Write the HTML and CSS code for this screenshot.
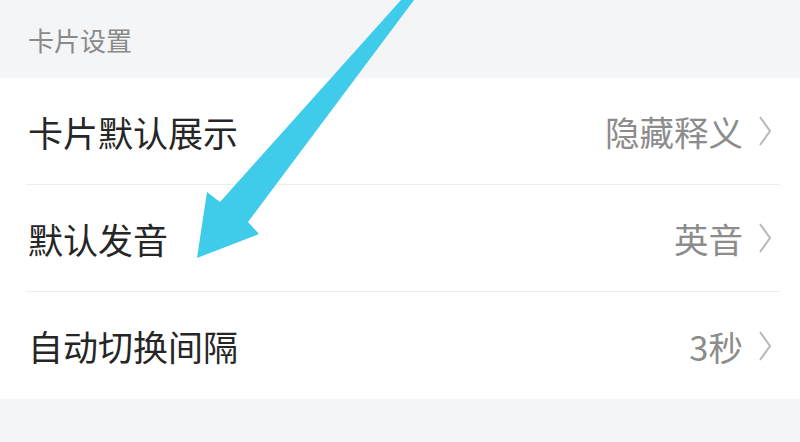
FILE: index.html
```html
<!DOCTYPE html>
<html lang="zh-CN">
<head>
    <meta charset="UTF-8">
    <meta name="viewport" content="width=device-width, initial-scale=1.0">
    <title>卡片设置</title>
    <link rel="stylesheet" href="styles.css">
</head>
<body>
    <div class="page">
        <div class="section-title">卡片设置</div>

        <div class="card">
            <div class="row">
                <span class="label">卡片默认展示</span>
                <span class="value">隐藏释义
                    <svg class="chevron" viewBox="0 0 14 32"><path d="M2 2 L12 16 L2 30"/></svg>
                </span>
            </div>
            <div class="row">
                <span class="label">默认发音</span>
                <span class="value">英音
                    <svg class="chevron" viewBox="0 0 14 32"><path d="M2 2 L12 16 L2 30"/></svg>
                </span>
            </div>
            <div class="row last">
                <span class="label">自动切换间隔</span>
                <span class="value">3秒
                    <svg class="chevron" viewBox="0 0 14 32"><path d="M2 2 L12 16 L2 30"/></svg>
                </span>
            </div>
        </div>

        <!-- 标注箭头 -->
        <svg class="pointer" viewBox="0 0 800 442">
            <polygon points="414,0 401,0 220,202 207,192 197,258 259,234 248,222"/>
        </svg>
    </div>
</body>
</html>
```

FILE: styles.css
```css
body {
    margin: 0;
    font-family: "Noto Sans CJK SC", "Noto Sans", sans-serif;
    background: #f4f5f7;
}
.page {
    position: relative;
    width: 800px;
    height: 442px;
    overflow: hidden;
}
.section-title {
    height: 78px;
    padding-left: 28px;
    display: flex;
    align-items: center;
    font-size: 26px;
    color: #8a8a8a;
}
.card {
    background: white;
}
.row {
    height: 106px;
    margin-left: 26px;
    margin-right: 20px;
    padding-left: 2px;
    padding-right: 8px;
    display: flex;
    align-items: center;
    justify-content: space-between;
    border-bottom: 1px solid #ededed;
}
.row.last {
    border-bottom: none;
    height: 107px;
}
.label {
    font-size: 35px;
    color: #262626;
}
.value {
    display: flex;
    align-items: center;
    gap: 15px;
    font-size: 34.5px;
    color: #8c8c8c;
}
.chevron {
    width: 14px;
    height: 32px;
    fill: none;
    stroke: #b8b8b8;
    stroke-width: 2;
}
.pointer {
    position: absolute;
    left: 0;
    top: 0;
    width: 800px;
    height: 442px;
    fill: #3fcbea;
}
```
